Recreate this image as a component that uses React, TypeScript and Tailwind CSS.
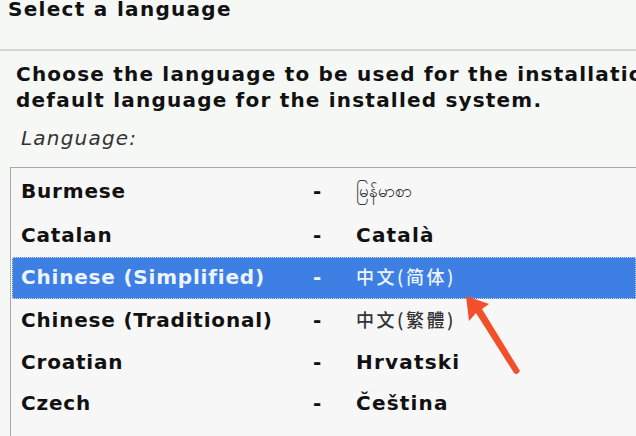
const rows = [
  { name: 'Burmese', native: 'မြန်မာစာ', h: 'h-[48px]', cjk: false },
  { name: 'Catalan', native: 'Català', h: 'h-[41px]', cjk: false },
  { name: 'Chinese (Simplified)', native: '中文(简体)', h: 'h-[42px]', cjk: true, selected: true },
  { name: 'Chinese (Traditional)', native: '中文(繁體)', h: 'h-[44px]', cjk: true },
  { name: 'Croatian', native: 'Hrvatski', h: 'h-[41px]', cjk: false },
  { name: 'Czech', native: 'Čeština', h: 'h-[41px]', cjk: false },
  { name: 'Danish', native: 'Dansk', h: 'h-[41px]', cjk: false },
]

export default function App() {
  return (
    <div className="relative w-[636px] h-[436px] overflow-hidden bg-[#f6f8f6] text-[#111] font-['DejaVu_Sans',sans-serif]">
      <div className="h-[52px] px-2">
        <h1 className="-mt-[3px] text-[20px] leading-[24px] font-bold tracking-[1.3px] whitespace-nowrap">Select a language</h1>
      </div>
      <div className="h-[2px] bg-[#d2d5d2]" />

      <div className="pl-4 pt-[10px] text-[20px] leading-[26px] font-bold tracking-[1.2px] whitespace-nowrap">
        <p>Choose the language to be used for the installation process.</p>
        <p>default language for the installed system.</p>
      </div>
      <div className="pl-[21px] pt-[12px] text-[20px] leading-[26px] italic tracking-[1.2px] text-[#333]">Language:</div>

      <div className="mt-[16px] ml-[10px] border-l border-t border-[#a9aba9] bg-[#f7f7f7] pl-[1px]">
        {rows.map((r) => (
          <div
            key={r.name}
            className={`${r.h} pb-[3px] flex items-center whitespace-nowrap text-[20px] tracking-[0.8px] ${
              r.selected ? 'bg-[#3d7fe3] text-[#eef4fd] outline outline-1 outline-dotted outline-[#c9dcf7] -outline-offset-1' : ''
            }`}
          >
            <span className="w-[301px] pl-[9px] font-bold">{r.name}</span>
            <span className="w-[43px] font-bold">-</span>
            <span
              className={
                r.cjk
                  ? `font-['Noto_Sans_CJK_SC','Noto_Sans_CJK_TC',sans-serif] text-[18px] font-medium tracking-[2.5px] ${r.selected ? '' : 'text-[#333]'}`
                  : r.name === 'Burmese'
                  ? "font-['Noto_Sans','DejaVu_Sans',sans-serif] text-[17px] font-normal tracking-normal text-[#333]"
                  : 'font-bold tracking-[1.2px]'
              }
            >
              {r.native}
            </span>
          </div>
        ))}
      </div>

      <svg className="absolute left-0 top-0 pointer-events-none" width="636" height="436" viewBox="0 0 636 436">
        <path
          d="M466 296 L469 321 L476 313 L514 373 Q517 376 520 371 L482 309 L489 304 Z"
          fill="#f1502b"
        />
      </svg>
    </div>
  )
}
